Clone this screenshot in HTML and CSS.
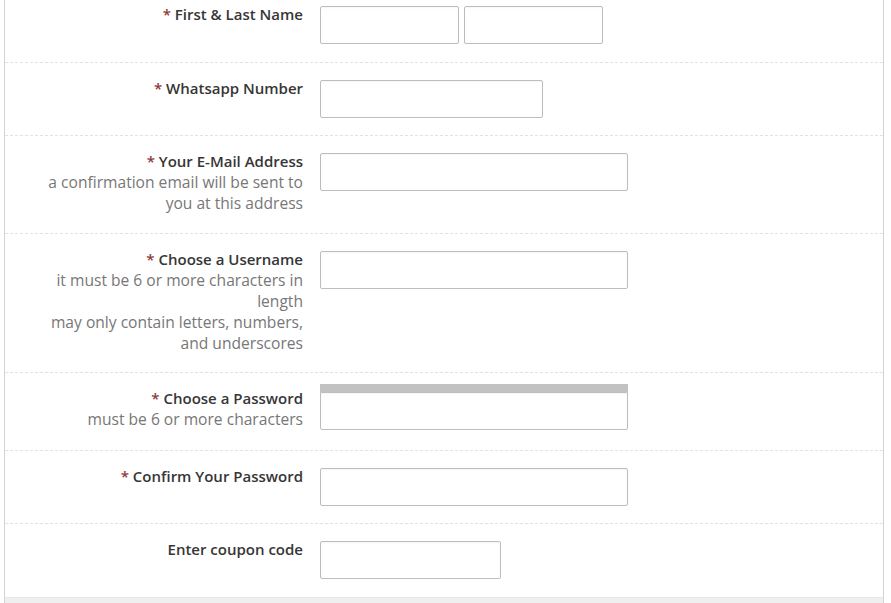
FILE: index.html
```html
<!DOCTYPE html>
<html>
<head>
<meta charset="utf-8">
<link rel="stylesheet" href="styles.css">
</head>
<body>
<div class="panel">
  <form class="form">
    <div class="row first">
      <div class="label"><span class="req">*</span> First &amp; Last Name</div>
      <div class="field pair">
        <input class="input w139" type="text">
        <input class="input w139" type="text">
      </div>
    </div>
    <div class="row">
      <div class="label"><span class="req">*</span> Whatsapp Number</div>
      <div class="field"><input class="input w223" type="text"></div>
    </div>
    <div class="row tall">
      <div class="label"><span class="req">*</span> Your E-Mail Address
        <div class="hint">a confirmation email will be sent to you at this address</div>
      </div>
      <div class="field"><input class="input w308" type="text"></div>
    </div>
    <div class="row taller">
      <div class="label"><span class="req">*</span> Choose a Username
        <div class="hint">it must be 6 or more characters in length</div>
        <div class="hint">may only contain letters, numbers, and underscores</div>
      </div>
      <div class="field"><input class="input w308" type="text"></div>
    </div>
    <div class="row pw">
      <div class="label"><span class="req">*</span> Choose a Password
        <div class="hint">must be 6 or more characters</div>
      </div>
      <div class="field strength">
        <div class="meter"></div>
        <input class="input w308 flat-top" type="password">
      </div>
    </div>
    <div class="row">
      <div class="label"><span class="req">*</span> Confirm Your Password</div>
      <div class="field"><input class="input w308" type="password"></div>
    </div>
    <div class="row last">
      <div class="label">Enter coupon code</div>
      <div class="field"><input class="input w181" type="text"></div>
    </div>
  </form>
  <div class="footer-band"></div>
</div>
</body>
</html>
```
FILE: styles.css
```css
html, body {
  margin: 0;
  padding: 0;
  background: #ffffff;
  overflow: hidden;
}
body {
  font-family: "Open Sans", "Noto Sans", "DejaVu Sans", sans-serif;
  color: #333333;
}
.panel {
  margin: -11px 0 0 4px;
  width: 878px;
  border-left: 1px solid #d4d4d4;
  border-right: 1px solid #d4d4d4;
}
.form {
  display: flex;
  flex-direction: column;
}
.row {
  display: grid;
  grid-template-columns: 298px 1fr;
  column-gap: 17px;
  padding: 15px 0 17px;
  border-top: 1px dashed #e2e2e2;
}
.row.first {
  border-top: none;
  padding-bottom: 18px;
}
.row.tall {
  padding-bottom: 19px;
}
.row.taller {
  padding-bottom: 18px;
}
.label {
  padding-left: 38px;
  text-align: right;
  font-size: 15px;
  line-height: 21px;
  font-weight: 600;
  color: #363636;
}
.req {
  color: #8e3a3a;
}
.hint {
  font-weight: 400;
  font-size: 15.6px;
  color: #777777;
}
.field {
  padding-top: 2px;
  display: flex;
}
.pair {
  gap: 5px;
}
.input {
  box-sizing: border-box;
  height: 38px;
  margin: 0;
  border: 1px solid #bdbdbd;
  border-radius: 2px;
  background: #ffffff;
  box-shadow: inset 0 1px 2px rgba(0,0,0,0.04);
  padding: 0 8px;
  font: inherit;
}
.w139 { width: 139px; }
.w223 { width: 223px; }
.w308 { width: 308px; }
.w181 { width: 181px; }
.strength {
  flex-direction: column;
  padding-top: 0;
  margin-top: -4px;
}
.meter {
  width: 308px;
  height: 8px;
  background: #c2c2c2;
}
.flat-top {
  border-top-left-radius: 0;
  border-top-right-radius: 0;
}
.row.pw {
  padding-bottom: 20px;
}
.row.last {
  padding-bottom: 18px;
}
.footer-band {
  height: 10px;
  background: #efefef;
  border-top: 1px solid #e8e8e8;
}
```
